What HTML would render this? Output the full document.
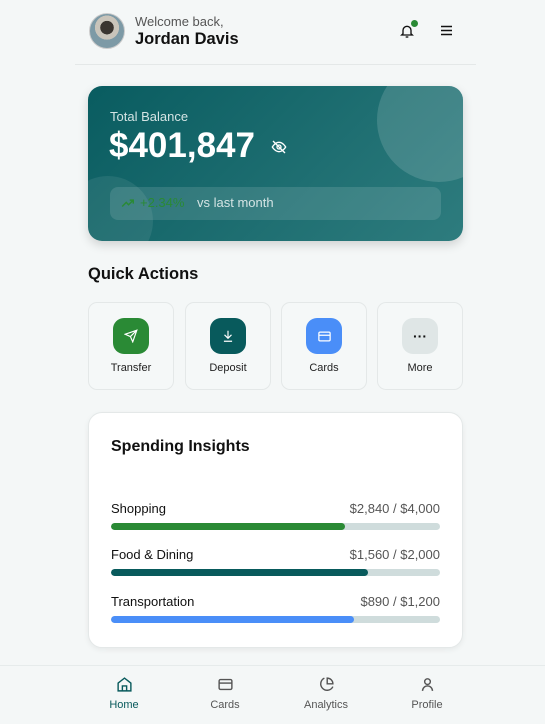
<!DOCTYPE html><html><head><style>
*{margin:0;padding:0;box-sizing:border-box}
body{width:545px;height:724px;background:#f4f7f7;font-family:"Liberation Sans",sans-serif;position:relative;overflow:hidden;color:#111}
.abs{position:absolute}
.qa{position:absolute;top:302px;width:86px;height:88px;border:1px solid #e4e8e8;border-radius:9px;background:#f5f8f8;text-align:center}
.qa .ic{width:36px;height:36px;border-radius:11px;margin:15px auto 0;display:flex;align-items:center;justify-content:center}
.qa .t{font-size:11px;margin-top:8px;color:#222}
.row{position:absolute;left:111px;width:329px;font-size:13px}
.row .v{position:absolute;right:0;top:0;color:#555}
.bar{position:absolute;left:0;top:22px;width:329px;height:7px;border-radius:4px;background:#cfdcdc;overflow:hidden}
.bar i{display:block;height:100%;border-radius:4px}
.nav{position:absolute;top:676px;width:80px;text-align:center;font-size:11px;color:#555}
.nav svg{display:block;margin:0 auto 6px}
</style></head><body>
<div class="abs" style="left:89px;top:13px;width:36px;height:36px;border-radius:50%;background:radial-gradient(circle at 50% 40%,#3a3530 0 25%,#c9c4ba 26% 45%,#7d9aa6 46%);border:1px solid #ccc"></div>
<div class="abs" style="left:135px;top:14px;font-size:13px;color:#555">Welcome back,</div>
<div class="abs" style="left:135px;top:30px;font-size:16.5px;font-weight:bold">Jordan Davis</div>
<svg class="abs" style="left:399px;top:23px" width="16" height="16" viewBox="0 0 24 24" fill="none" stroke="#111" stroke-width="2"><path d="M6 16V11a6 6 0 0112 0v5l2 2H4z"/><path d="M10 21h4"/></svg>
<div class="abs" style="left:411px;top:20px;width:7px;height:7px;border-radius:50%;background:#2a8a35"></div>
<svg class="abs" style="left:440px;top:25px" width="13" height="11" viewBox="0 0 13 11" stroke="#111" stroke-width="1.5"><path d="M1 1.5h11M1 5.5h11M1 9.5h11"/></svg>
<div class="abs" style="left:75px;top:64px;width:401px;height:1px;background:#e4e8e8"></div>
<div class="abs" style="left:88px;top:86px;width:375px;height:155px;border-radius:14px;background:linear-gradient(135deg,#095c60,#2e7c7e);overflow:hidden;box-shadow:0 4px 10px rgba(0,0,0,.15)">
<div class="abs" style="left:289px;top:-28px;width:124px;height:124px;border-radius:50%;background:rgba(255,255,255,.14)"></div>
<div class="abs" style="left:-25px;top:90px;width:90px;height:90px;border-radius:50%;background:rgba(255,255,255,.08)"></div>
<div class="abs" style="left:22px;top:23px;font-size:13px;color:#d4e4e4">Total Balance</div>
<div class="abs" style="left:21px;top:40px;font-size:35px;font-weight:bold;color:#fff">$401,847</div>
<svg class="abs" style="left:183px;top:53px" width="16" height="16" viewBox="0 0 24 24" fill="none" stroke="#fff" stroke-width="2"><path d="M2 12s4-7 10-7 10 7 10 7-4 7-10 7S2 12 2 12z"/><circle cx="12" cy="12" r="3"/><path d="M3 3l18 18"/></svg>
<div class="abs" style="left:22px;top:101px;width:331px;height:33px;border-radius:8px;background:rgba(255,255,255,.12)"></div>
<svg class="abs" style="left:33px;top:110px" width="14" height="14" viewBox="0 0 24 24" fill="none" stroke="#2a8a35" stroke-width="2.5"><path d="M2 18l7-7 4 4 8-8M15 7h6v6"/></svg>
<div class="abs" style="left:52px;top:109px;font-size:13px;color:#2a8a35">+2.34%</div>
<div class="abs" style="left:109px;top:109px;font-size:13px;color:#d4e4e4">vs last month</div>
</div>
<div class="abs" style="left:88px;top:265px;font-size:16.5px;font-weight:bold">Quick Actions</div>
<div class="qa" style="left:88px"><div class="ic" style="background:#2a8a35"><svg width="14" height="14" viewBox="0 0 24 24" fill="none" stroke="#fff" stroke-width="2"><path d="M22 2L11 13M22 2l-7 20-4-9-9-4z"/></svg></div><div class="t">Transfer</div></div>
<div class="qa" style="left:185px"><div class="ic" style="background:#085a5c"><svg width="14" height="14" viewBox="0 0 24 24" fill="none" stroke="#fff" stroke-width="2"><path d="M12 3v12M6 10l6 6 6-6M5 21h14"/></svg></div><div class="t">Deposit</div></div>
<div class="qa" style="left:281px"><div class="ic" style="background:#4a8ef8"><svg width="15" height="15" viewBox="0 0 24 24" fill="none" stroke="#fff" stroke-width="2"><rect x="3" y="5" width="18" height="14" rx="2"/><path d="M3 10h18"/></svg></div><div class="t">Cards</div></div>
<div class="qa" style="left:377px"><div class="ic" style="background:#dfe6e6;font-weight:bold;font-size:14px;line-height:8px">···</div><div class="t">More</div></div>
<div class="abs" style="left:88px;top:412px;width:375px;height:236px;background:#fff;border:1px solid #e4e8e8;border-radius:14px;box-shadow:0 2px 6px rgba(0,0,0,.06)"></div>
<div class="abs" style="left:111px;top:438px;font-size:16px;font-weight:bold">Spending Insights</div>
<div class="row" style="top:501px">Shopping<span class="v">$2,840 / $4,000</span><div class="bar"><i style="width:71%;background:#2a8a35"></i></div></div>
<div class="row" style="top:547px">Food &amp; Dining<span class="v">$1,560 / $2,000</span><div class="bar"><i style="width:78%;background:#085a5c"></i></div></div>
<div class="row" style="top:594px">Transportation<span class="v">$890 / $1,200</span><div class="bar"><i style="width:74%;background:#4a8ef8"></i></div></div>
<div class="abs" style="left:0;top:665px;width:545px;height:1px;background:#e6ebeb"></div>
<div class="nav" style="left:84px;color:#085a5c"><svg width="17" height="17" viewBox="0 0 24 24" fill="none" stroke="#085a5c" stroke-width="2"><path d="M3 10l9-7 9 7v11H3z"/><path d="M9 21v-7h6v7"/></svg>Home</div>
<div class="nav" style="left:185px"><svg width="17" height="17" viewBox="0 0 24 24" fill="none" stroke="#555" stroke-width="2"><rect x="3" y="5" width="18" height="14" rx="2"/><path d="M3 10h18"/></svg>Cards</div>
<div class="nav" style="left:286px"><svg width="17" height="17" viewBox="0 0 24 24" fill="none" stroke="#555" stroke-width="2"><path d="M21 15A9 9 0 1 1 9 3"/><path d="M13 3a8 8 0 0 1 8 8h-8z"/></svg>Analytics</div>
<div class="nav" style="left:387px"><svg width="17" height="17" viewBox="0 0 24 24" fill="none" stroke="#555" stroke-width="2"><circle cx="12" cy="8" r="4"/><path d="M5 21a7 7 0 0 1 14 0"/></svg>Profile</div>
</body></html>
